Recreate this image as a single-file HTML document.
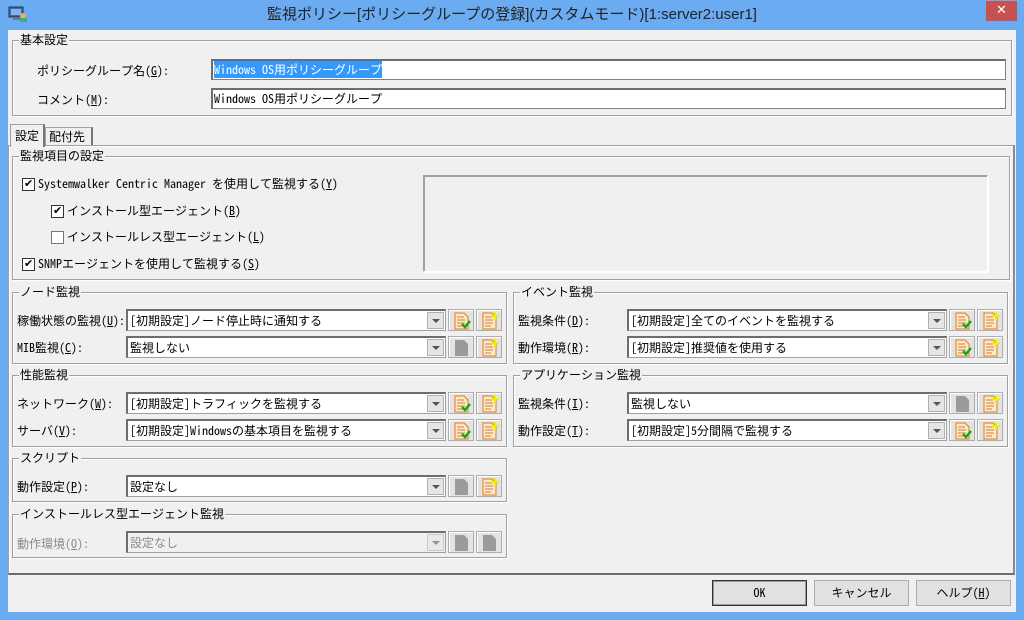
<!DOCTYPE html>
<html><head><meta charset="utf-8"><style>
*{box-sizing:border-box;margin:0;padding:0}
body{width:1024px;height:620px;background:#6aabf2;position:relative;overflow:hidden;font-family:"Noto Sans Mono CJK JP","Liberation Mono","Noto Sans CJK JP",monospace;font-size:12px;color:#000}
.a{position:absolute}
.t{position:absolute;white-space:nowrap;line-height:14px;font-size:12px}
.title{left:0;top:6px;width:1024px;text-align:center;font-family:"Liberation Sans","Noto Sans CJK JP",sans-serif;font-size:15px;color:#222;line-height:18px}
.client{left:8px;top:30px;width:1008px;height:582px;background:#f0f0f0}
.grp{position:absolute;border:1px solid #a0a0a0;box-shadow:inset 1px 1px 0 #fff,1px 1px 0 #fff}
.lg{position:absolute;top:-8px;left:6px;background:#f0f0f0;padding:0 1px;line-height:14px;white-space:nowrap}
.inp{position:absolute;background:#fff;border:1px solid #828282;border-top:2px solid #6d6d6d;border-left:2px solid #6d6d6d;height:21px;padding-left:1px;line-height:18px;white-space:nowrap}
.cb{position:absolute;background:#fff;border:1px solid #a0a0a0;border-top:2px solid #6d6d6d;border-left:2px solid #6d6d6d;height:22px;line-height:19px;padding-left:2px;white-space:nowrap}
.cb.dis{background:#f0f0f0;color:#8a8a8a}
.arr{position:absolute;right:1px;top:1px;width:17px;height:17px;background:#e5e5e5;border:1px solid #b0b0b0}
.arr:after{content:"";position:absolute;left:4px;top:6px;border-left:4px solid transparent;border-right:4px solid transparent;border-top:4px solid #555}
.btn{position:absolute;width:26px;height:22px;background:#e3e3e3;border:1px solid #adadad;box-shadow:inset 1px 1px 0 #fff}
.btn svg{position:absolute;left:5px;top:2px}
.chk{position:absolute;width:13px;height:13px;background:#fff;border:1px solid #333}
.chk.on:after{content:"✔";position:absolute;left:1px;top:-2px;font-size:11px;line-height:14px;font-family:"DejaVu Sans",sans-serif}
.pb{position:absolute;height:26px;width:95px;background:#e1e1e1;border:1px solid #adadad;text-align:center;line-height:24px;font-size:12px}
</style></head><body>
<div class="a" style="left:8px;top:5px;width:20px;height:18px">
<svg width="20" height="18"><rect x="1" y="2" width="14" height="10" fill="#3a6fb5" stroke="#234"/><rect x="3" y="4" width="10" height="6" fill="#7fb3ea"/><rect x="5" y="13" width="8" height="2" fill="#778"/><circle cx="15" cy="11" r="3" fill="#e0b070"/><rect x="12" y="13" width="7" height="4" fill="#4a7"/></svg></div>
<div class="t title">監視ポリシー[ポリシーグループの登録](カスタムモード)[1:server2:user1]</div>
<div class="a" style="left:986px;top:1px;width:31px;height:20px;background:#c75050;color:#fff;text-align:center;font:bold 13px/20px 'DejaVu Sans',sans-serif">✕</div>
<div class="a client"></div>

<div class="grp" style="left:12px;top:40px;width:1000px;height:76px"><div class="lg">基本設定</div></div>
<div class="t" style="left:37px;top:64px">ポリシーグループ名(<u>G</u>):</div>
<div class="inp" style="left:211px;top:59px;width:795px"><span style="background:#3399ff;color:#fff">Windows OS用ポリシーグループ</span></div>
<div class="t" style="left:37px;top:93px">コメント(<u>M</u>):</div>
<div class="inp" style="left:211px;top:88px;width:795px">Windows OS用ポリシーグループ</div>

<div class="a" style="left:8px;top:145px;width:1007px;height:430px;border:1px solid #a0a0a0;border-right:2px solid #8a8a8a;border-bottom:2px solid #6d6d6d;box-shadow:inset 1px 1px 0 #fff"></div>
<div class="a" style="left:10px;top:124px;width:35px;height:23px;background:#f0f0f0;border:1px solid #a0a0a0;border-bottom:none;border-right:2px solid #777"></div>
<div class="t" style="left:15px;top:129px">設定</div>
<div class="a" style="left:45px;top:127px;width:48px;height:18px;border:1px solid #a0a0a0;border-bottom:none;border-right:2px solid #777"></div>
<div class="t" style="left:49px;top:130px">配付先</div>

<div class="grp" style="left:12px;top:156px;width:998px;height:124px"><div class="lg">監視項目の設定</div></div>
<div class="chk on" style="left:22px;top:178px"></div><div class="t" style="left:38px;top:177px">Systemwalker Centric Manager を使用して監視する(<u>Y</u>)</div>
<div class="chk on" style="left:51px;top:205px"></div><div class="t" style="left:67px;top:204px">インストール型エージェント(<u>B</u>)</div>
<div class="chk" style="left:51px;top:231px;border-color:#777"></div><div class="t" style="left:67px;top:230px">インストールレス型エージェント(<u>L</u>)</div>
<div class="chk on" style="left:22px;top:258px"></div><div class="t" style="left:38px;top:257px">SNMPエージェントを使用して監視する(<u>S</u>)</div>
<div class="a" style="left:423px;top:175px;width:565px;height:97px;border:1px solid #a0a0a0;box-shadow:inset 1px 1px 0 #a0a0a0,1px 1px 0 #fff;border-right-color:#fff;border-bottom-color:#fff"></div>

<svg width="0" height="0" style="position:absolute"><defs>
<g id="doc"><path d="M1 1h9l4 4v12H1z" fill="#fde8c8" stroke="#e07a20"/><path d="M3 5h7M3 8h8M3 11h8M3 14h6" stroke="#d08040"/></g>
<g id="gdoc"><path d="M1 1h9l4 4v12H1z" fill="#9a9a9a"/></g>
</defs></svg>

<div class="grp" style="left:12px;top:292px;width:495px;height:72px"><div class="lg">ノード監視</div></div>
<div class="grp" style="left:12px;top:375px;width:495px;height:72px"><div class="lg">性能監視</div></div>
<div class="grp" style="left:12px;top:458px;width:495px;height:44px"><div class="lg">スクリプト</div></div>
<div class="grp" style="left:12px;top:514px;width:495px;height:44px"><div class="lg">インストールレス型エージェント監視</div></div>
<div class="grp" style="left:513px;top:292px;width:495px;height:72px"><div class="lg">イベント監視</div></div>
<div class="grp" style="left:513px;top:375px;width:495px;height:72px"><div class="lg">アプリケーション監視</div></div>

<div class="t" style="left:17px;top:314px">稼働状態の監視(<u>U</u>):</div>
<div class="cb" style="left:126px;top:309px;width:320px">[初期設定]ノード停止時に通知する<div class="arr"></div></div>
<div class="btn" style="left:448px;top:309px"><svg width="17" height="18"><use href="#doc"/><path d="M8 12l3 3 5-6" stroke="#1a1" stroke-width="2.5" fill="none"/></svg></div>
<div class="btn" style="left:476px;top:309px"><svg width="17" height="18"><use href="#doc"/><path d="M13 0v8M9 4h8" stroke="#ee0" stroke-width="2"/></svg></div>

<div class="t" style="left:17px;top:341px">MIB監視(<u>C</u>):</div>
<div class="cb" style="left:126px;top:336px;width:320px">監視しない<div class="arr"></div></div>
<div class="btn" style="left:448px;top:336px"><svg width="17" height="18"><use href="#gdoc"/></svg></div>
<div class="btn" style="left:476px;top:336px"><svg width="17" height="18"><use href="#doc"/><path d="M13 0v8M9 4h8" stroke="#ee0" stroke-width="2"/></svg></div>

<div class="t" style="left:17px;top:397px">ネットワーク(<u>W</u>):</div>
<div class="cb" style="left:126px;top:392px;width:320px">[初期設定]トラフィックを監視する<div class="arr"></div></div>
<div class="btn" style="left:448px;top:392px"><svg width="17" height="18"><use href="#doc"/><path d="M8 12l3 3 5-6" stroke="#1a1" stroke-width="2.5" fill="none"/></svg></div>
<div class="btn" style="left:476px;top:392px"><svg width="17" height="18"><use href="#doc"/><path d="M13 0v8M9 4h8" stroke="#ee0" stroke-width="2"/></svg></div>

<div class="t" style="left:17px;top:424px">サーバ(<u>V</u>):</div>
<div class="cb" style="left:126px;top:419px;width:320px">[初期設定]Windowsの基本項目を監視する<div class="arr"></div></div>
<div class="btn" style="left:448px;top:419px"><svg width="17" height="18"><use href="#doc"/><path d="M8 12l3 3 5-6" stroke="#1a1" stroke-width="2.5" fill="none"/></svg></div>
<div class="btn" style="left:476px;top:419px"><svg width="17" height="18"><use href="#doc"/><path d="M13 0v8M9 4h8" stroke="#ee0" stroke-width="2"/></svg></div>

<div class="t" style="left:17px;top:480px">動作設定(<u>P</u>):</div>
<div class="cb" style="left:126px;top:475px;width:320px">設定なし<div class="arr"></div></div>
<div class="btn" style="left:448px;top:475px"><svg width="17" height="18"><use href="#gdoc"/></svg></div>
<div class="btn" style="left:476px;top:475px"><svg width="17" height="18"><use href="#doc"/><path d="M13 0v8M9 4h8" stroke="#ee0" stroke-width="2"/></svg></div>

<div class="t" style="left:17px;top:537px;color:#8a8a8a">動作環境(<u>O</u>):</div>
<div class="cb dis" style="left:126px;top:531px;width:320px">設定なし<div class="arr" style="opacity:.6"></div></div>
<div class="btn" style="left:448px;top:531px"><svg width="17" height="18"><use href="#gdoc"/></svg></div>
<div class="btn" style="left:476px;top:531px"><svg width="17" height="18"><use href="#gdoc"/></svg></div>

<div class="t" style="left:518px;top:314px">監視条件(<u>D</u>):</div>
<div class="cb" style="left:627px;top:309px;width:320px">[初期設定]全てのイベントを監視する<div class="arr"></div></div>
<div class="btn" style="left:949px;top:309px"><svg width="17" height="18"><use href="#doc"/><path d="M8 12l3 3 5-6" stroke="#1a1" stroke-width="2.5" fill="none"/></svg></div>
<div class="btn" style="left:977px;top:309px"><svg width="17" height="18"><use href="#doc"/><path d="M13 0v8M9 4h8" stroke="#ee0" stroke-width="2"/></svg></div>

<div class="t" style="left:518px;top:341px">動作環境(<u>R</u>):</div>
<div class="cb" style="left:627px;top:336px;width:320px">[初期設定]推奨値を使用する<div class="arr"></div></div>
<div class="btn" style="left:949px;top:336px"><svg width="17" height="18"><use href="#doc"/><path d="M8 12l3 3 5-6" stroke="#1a1" stroke-width="2.5" fill="none"/></svg></div>
<div class="btn" style="left:977px;top:336px"><svg width="17" height="18"><use href="#doc"/><path d="M13 0v8M9 4h8" stroke="#ee0" stroke-width="2"/></svg></div>

<div class="t" style="left:518px;top:397px">監視条件(<u>I</u>):</div>
<div class="cb" style="left:627px;top:392px;width:320px">監視しない<div class="arr"></div></div>
<div class="btn" style="left:949px;top:392px"><svg width="17" height="18"><use href="#gdoc"/></svg></div>
<div class="btn" style="left:977px;top:392px"><svg width="17" height="18"><use href="#doc"/><path d="M13 0v8M9 4h8" stroke="#ee0" stroke-width="2"/></svg></div>

<div class="t" style="left:518px;top:424px">動作設定(<u>T</u>):</div>
<div class="cb" style="left:627px;top:419px;width:320px">[初期設定]5分間隔で監視する<div class="arr"></div></div>
<div class="btn" style="left:949px;top:419px"><svg width="17" height="18"><use href="#doc"/><path d="M8 12l3 3 5-6" stroke="#1a1" stroke-width="2.5" fill="none"/></svg></div>
<div class="btn" style="left:977px;top:419px"><svg width="17" height="18"><use href="#doc"/><path d="M13 0v8M9 4h8" stroke="#ee0" stroke-width="2"/></svg></div>

<div class="pb" style="left:712px;top:580px;border:1px solid #333;box-shadow:inset 0 0 0 1px #999">OK</div>
<div class="pb" style="left:814px;top:580px">キャンセル</div>
<div class="pb" style="left:916px;top:580px">ヘルプ(<u>H</u>)</div>
</body></html>
